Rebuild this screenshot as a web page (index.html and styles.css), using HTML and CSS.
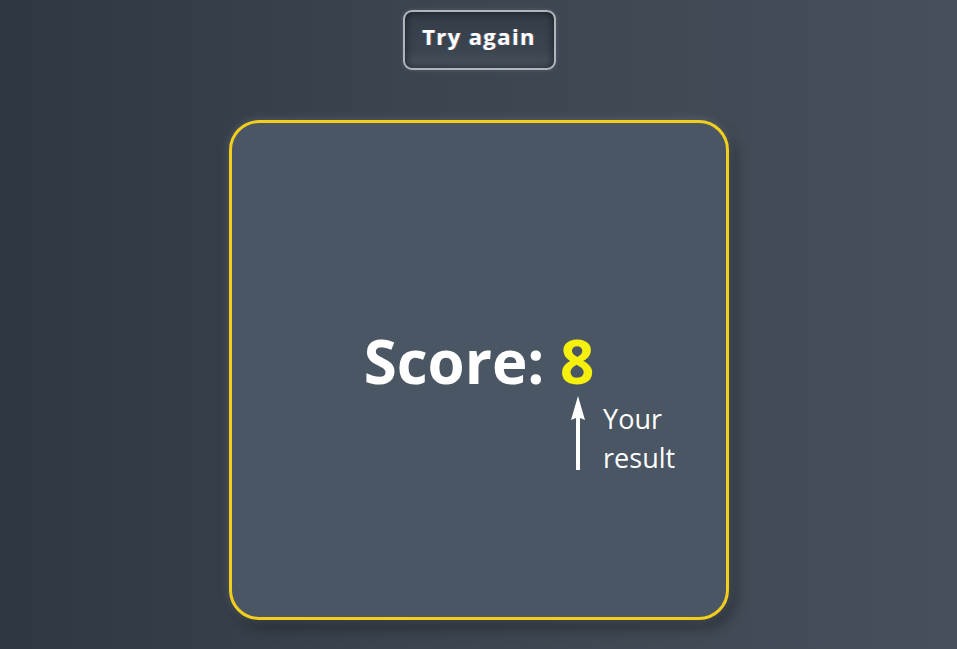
FILE: index.html
```html
<!DOCTYPE html>
<html>
<head>
<meta charset="utf-8">
<link rel="stylesheet" href="styles.css">
</head>
<body>
<main class="page">
  <button class="retry">Try again</button>
  <section class="card">
    <div class="score">Score: <span class="value">8<span class="note"><svg class="arrow" width="16" height="76" viewBox="0 0 16 76"><path d="M8 0 L15 24 L10 22 L10 74 L6 74 L6 22 L1 24 Z" fill="#fff"/></svg><span class="note-text">Your<br>result</span></span></span></div>
  </section>
</main>
</body>
</html>
```
FILE: styles.css
```css
html, body {
  margin: 0;
  height: 100%;
}
body {
  background: linear-gradient(90deg, #2f3842 0%, #3a434e 40%, #46505c 100%);
  font-family: "Open Sans", "Noto Sans", sans-serif;
  color: #fff;
  overflow: hidden;
}
.page {
  display: flex;
  flex-direction: column;
  align-items: center;
  padding-top: 10px;
}
.retry {
  width: 153px;
  height: 60px;
  border: 2px solid #aeb5bd;
  border-radius: 9px;
  background: linear-gradient(180deg, #333c46 0%, #3b4550 70%, #4a5460 100%);
  box-shadow: inset 0 0 8px rgba(0,0,0,0.6), 0 0 4px rgba(255,255,255,0.15);
  color: #fff;
  font-family: "Open Sans", sans-serif;
  font-weight: 700;
  font-size: 22px;
  letter-spacing: 1.4px;
  text-shadow: 1px 0 0 rgba(255,120,120,0.35), -1px 0 0 rgba(120,200,255,0.35);
  padding: 0 0 9px;
  margin-left: 1px;
}
.card {
  margin-top: 50px;
  width: 494px;
  height: 494px;
  border: 3px solid #f2cf1d;
  border-radius: 30px;
  background: #4a5663;
  box-shadow: 0 0 10px rgba(255,255,255,0.18), 6px 8px 14px rgba(0,0,0,0.35);
  display: flex;
  align-items: center;
  justify-content: center;
  margin-left: 1px;
}
.score {
  font-weight: 700;
  font-size: 60px;
  line-height: 1.2;
  margin-top: -18px;
}
.value {
  color: #f6f00e;
  position: relative;
}
.note {
  position: absolute;
  left: 10px;
  top: 74px;
  display: flex;
  align-items: flex-start;
  gap: 17px;
}
.arrow {
  display: block;
  margin-top: 2px;
}
.note-text {
  font-weight: 400;
  font-size: 27px;
  line-height: 39px;
  color: #fff;
  margin-top: 5px;
}
```
